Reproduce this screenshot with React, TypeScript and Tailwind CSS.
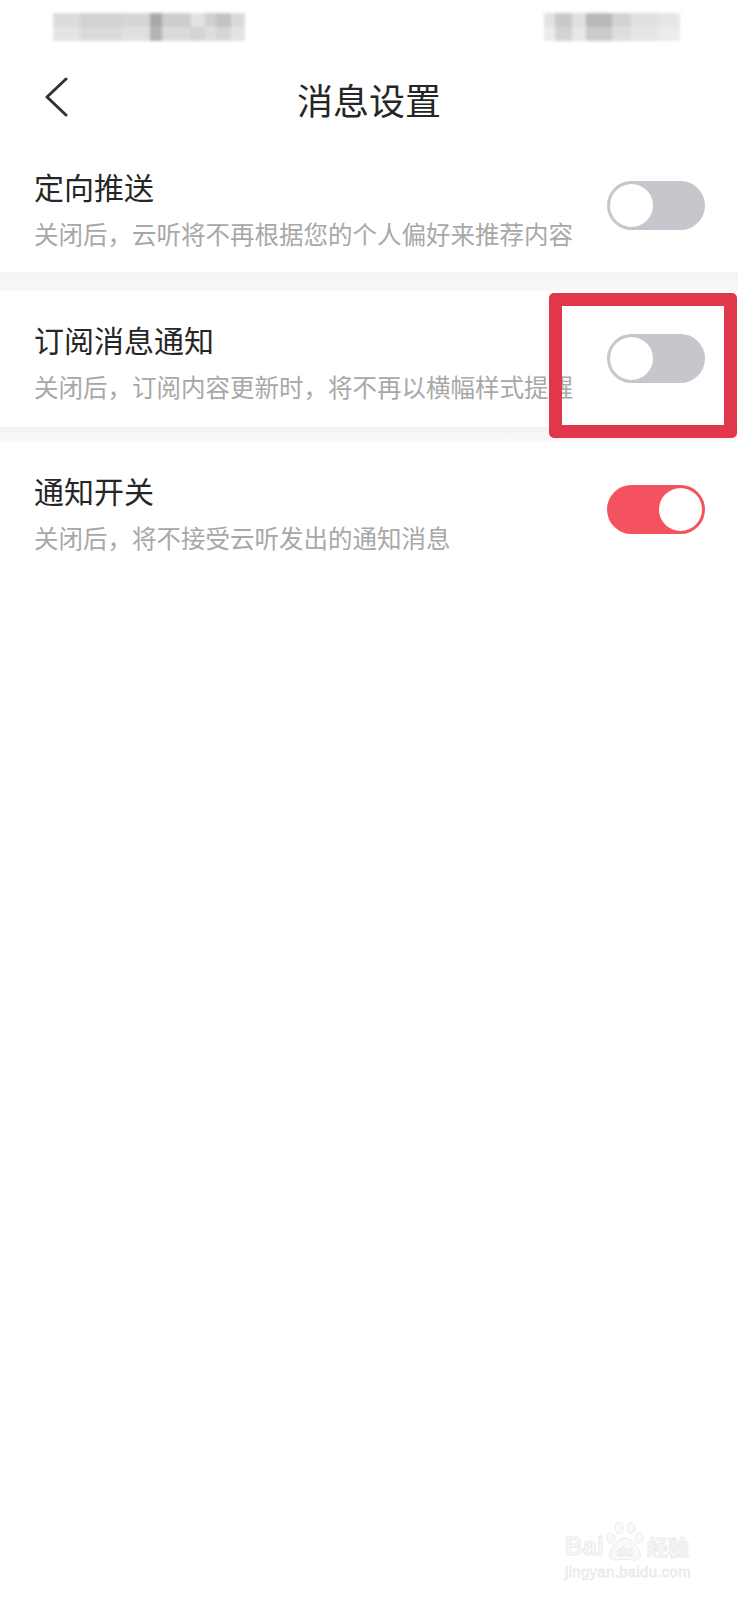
import React from "react";

const FONT = `"Noto Sans CJK SC", "Noto Sans", sans-serif`;

// mosaic cells of the blurred status bar: [width, top colour, bottom colour]
const leftCells: [number, string, string][] = [
  [27, "#dcdcdc", "#e4e4e4"],
  [42, "#d2d2d2", "#dadada"],
  [28, "#d6d6d6", "#e0e0e0"],
  [12, "#a9a9a9", "#b4b4b4"],
  [29, "#cdcdcd", "#dadada"],
  [14, "#e2e2e2", "#d4d4d4"],
  [11, "#d0d0d0", "#dedede"],
  [15, "#c3c3c3", "#d6d6d6"],
  [14, "#dadada", "#e3e3e3"],
];

const rightCells: [number, string, string][] = [
  [11, "#e3e3e3", "#ebebeb"],
  [17, "#c9c9c9", "#d3d3d3"],
  [14, "#e0e0e0", "#e8e8e8"],
  [26, "#b9b9b9", "#cbcbcb"],
  [19, "#d3d3d3", "#dedede"],
  [28, "#e0e0e0", "#e6e6e6"],
  [21, "#e6e6e6", "#ececec"],
];

function Mosaic({ cells }: { cells: [number, string, string][] }) {
  return (
    <div className="flex blur-[1.5px]">
      {cells.map(([w, a, b], i) => (
        <div key={i} className="flex flex-col" style={{ width: w }}>
          <div className="h-[14px]" style={{ background: a }} />
          <div className="h-[14px]" style={{ background: b }} />
        </div>
      ))}
    </div>
  );
}

function Toggle({ on }: { on: boolean }) {
  return (
    <div
      className={
        on
          ? "mt-[13px] flex h-[49px] w-[98px] shrink-0 items-center justify-end rounded-full bg-[#f5525f] p-[3px]"
          : "mt-[13px] flex h-[49px] w-[98px] shrink-0 items-center justify-start rounded-full bg-[#c6c7cd] p-[3px]"
      }
    >
      <div className="h-[43px] w-[43px] rounded-full bg-white" />
    </div>
  );
}

function Row({ title, desc, on }: { title: string; desc: string; on: boolean }) {
  return (
    <div className="flex items-start justify-between pl-[34px] pr-[33px]">
      <div className="flex flex-col">
        <div className="text-[30px] leading-[36px] text-[#262626]">{title}</div>
        <div className="mt-[15px] text-[24.5px] leading-[30px] text-[#a8a8a8] whitespace-nowrap">{desc}</div>
      </div>
      <Toggle on={on} />
    </div>
  );
}

function Watermark() {
  return (
    <div className="absolute left-[565px] top-[1521px] flex flex-col items-start select-none opacity-70">
      <div className="flex items-end">
        <span className="text-[25px] leading-[26px] font-bold text-[#f6f6f6] [-webkit-text-stroke:1px_#e2e2e2] [font-family:'Liberation_Sans',sans-serif]">
          Bai
        </span>
        <svg width="42" height="42" viewBox="0 0 42 42" className="-mb-[4px]">
          <g fill="#f7f7f7" stroke="#e0e0e0" strokeWidth="1">
            <ellipse cx="7" cy="17" rx="4" ry="5" />
            <ellipse cx="15" cy="7" rx="4" ry="5.5" />
            <ellipse cx="27" cy="7" rx="4" ry="5.5" />
            <ellipse cx="35" cy="17" rx="4" ry="5" />
            <path d="M21 17 C13 17 8 27 6 32 C4 38 10 40 14 39 C18 38 24 38 28 39 C32 40 38 38 36 32 C34 27 29 17 21 17 Z" />
          </g>
          <text x="21" y="35" textAnchor="middle" fontSize="13" fontWeight="700" fill="#f8f8f8" stroke="#e0e0e0" strokeWidth="0.8" fontFamily="Liberation Sans, sans-serif">
            du
          </text>
        </svg>
        <span className="ml-[1px] text-[21px] leading-[26px] font-bold text-[#f6f6f6] [-webkit-text-stroke:1px_#e2e2e2]">
          经验
        </span>
      </div>
      <div className="mt-[4px] text-[15px] leading-[18px] text-[#f5f5f5] [-webkit-text-stroke:0.8px_#e0e0e0] [font-family:'Liberation_Sans',sans-serif] tracking-[0.3px]">
        jingyan.baidu.com
      </div>
    </div>
  );
}

export default function App() {
  return (
    <div className="relative h-[1600px] w-full overflow-hidden bg-white" style={{ fontFamily: FONT }}>
      {/* status bar (blurred in the original) */}
      <div className="flex h-[58px] items-start justify-between pt-[13px] pl-[53px] pr-[58px]">
        <Mosaic cells={leftCells} />
        <Mosaic cells={rightCells} />
      </div>

      {/* nav */}
      <div className="grid h-[81px] grid-cols-[1fr_auto_1fr] items-center">
        <div className="flex items-center pl-[45px]">
          <svg width="24" height="40" viewBox="0 0 24 40" className="-mt-[4px]">
            <polyline points="21,2 2,20 21,38" fill="none" stroke="#333" strokeWidth="3" strokeLinecap="round" strokeLinejoin="round" />
          </svg>
        </div>
        <div className="text-[36px] leading-[44px] text-[#262626]">消息设置</div>
        <div />
      </div>

      <div className="h-[133px] pt-[29px]">
        <Row title="定向推送" desc="关闭后，云听将不再根据您的个人偏好来推荐内容" on={false} />
      </div>
      <div className="h-[19px] bg-gradient-to-b from-[#f3f3f4] to-[#f8f8f9]" />
      <div className="h-[136px] pt-[30px]">
        <Row title="订阅消息通知" desc="关闭后，订阅内容更新时，将不再以横幅样式提醒" on={false} />
      </div>
      <div className="h-[15px] bg-gradient-to-b from-[#f3f3f4] to-[#f8f8f9]" />
      <div className="h-[136px] pt-[30px]">
        <Row title="通知开关" desc="关闭后，将不接受云听发出的通知消息" on={true} />
      </div>

      {/* red annotation box */}
      <div className="absolute left-[549px] top-[293px] h-[145px] w-[188px] rounded-[5px] border-[13px] border-[#e2364a]" />

      <Watermark />
    </div>
  );
}
